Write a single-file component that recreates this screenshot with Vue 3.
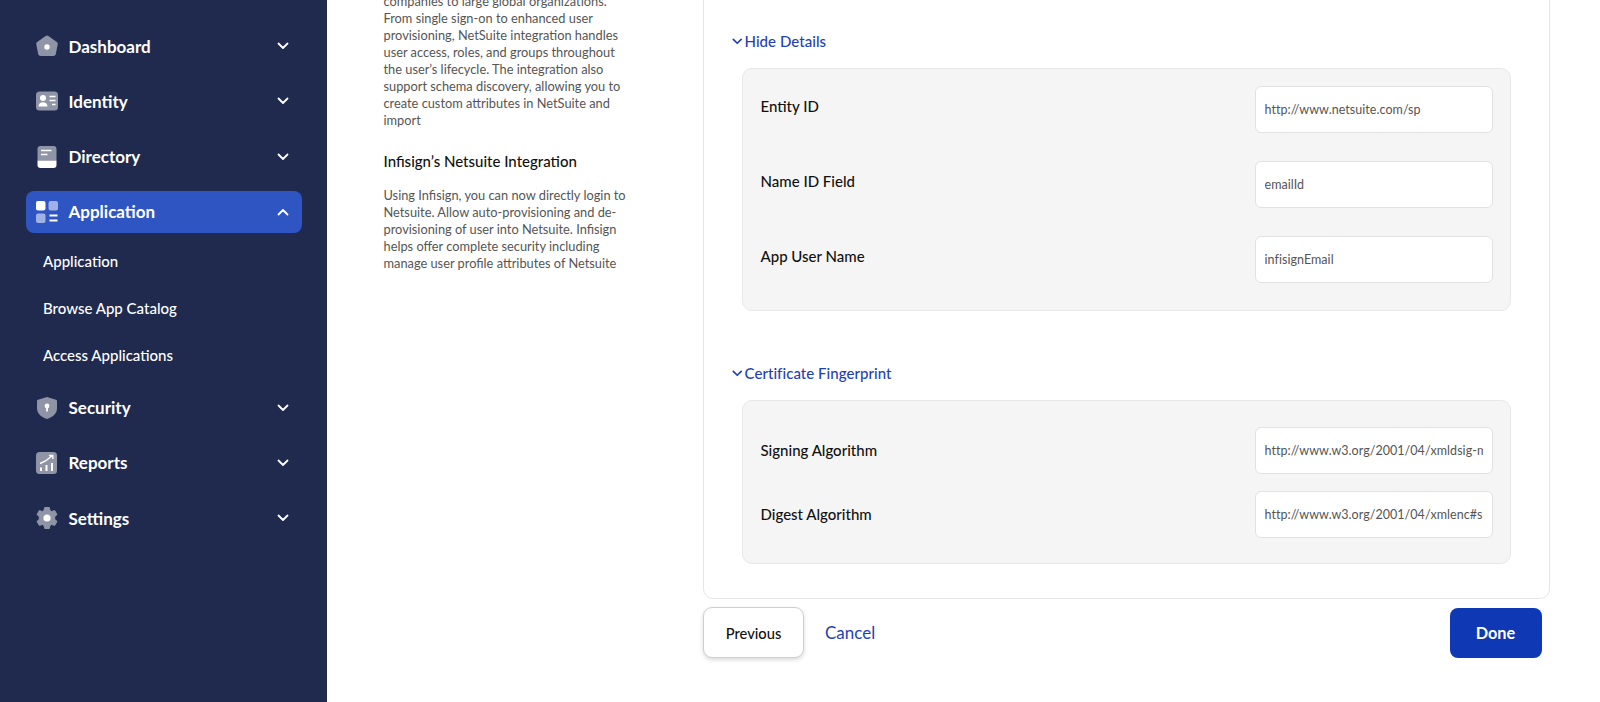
<script setup>
const aboveMenu = [
  { label: 'Dashboard', icon: 'dashboard' },
  { label: 'Identity', icon: 'identity' },
  { label: 'Directory', icon: 'directory' },
]
const belowMenu = [
  { label: 'Security', icon: 'security' },
  { label: 'Reports', icon: 'reports' },
  { label: 'Settings', icon: 'settings' },
]
const subItems = ['Application', 'Browse App Catalog', 'Access Applications']
const intro = [
  'companies to large global organizations.',
  'From single sign-on to enhanced user',
  'provisioning, NetSuite integration handles',
  'user access, roles, and groups throughout',
  'the user\u2019s lifecycle. The integration also',
  'support schema discovery, allowing you to',
  'create custom attributes in NetSuite and',
  'import',
]
const outro = [
  'Using Infisign, you can now directly login to',
  'Netsuite. Allow auto-provisioning and de-',
  'provisioning of user into Netsuite. Infisign',
  'helps offer complete security including',
  'manage user profile attributes of Netsuite',
]
const details = [
  { label: 'Entity ID', value: 'http://www.netsuite.com/sp' },
  { label: 'Name ID Field', value: 'emailId' },
  { label: 'App User Name', value: 'infisignEmail' },
]
const certs = [
  { label: 'Signing Algorithm', value: 'http://www.w3.org/2001/04/xmldsig-more#rsa-sha256' },
  { label: 'Digest Algorithm', value: 'http://www.w3.org/2001/04/xmlenc#sha256' },
]
</script>

<template>
  <div class="page">
    <aside class="sidebar">
      <div v-for="m in aboveMenu" :key="m.label" class="nav-row">
        <svg class="nav-icon" viewBox="0 0 22 22">
          <template v-if="m.icon === 'dashboard'">
            <path d="M9.6 1 1.2 7a2.4 2.4 0 0 0-.9 2.4l1.9 9.6c.2 1.2 1.2 2 2.4 2h12.8c1.2 0 2.2-.8 2.4-2l1.9-9.6A2.4 2.4 0 0 0 20.800 7L12.400 1a2.400 2.400 0 0 0-2.800 0Z" fill="#8f94a6"/>
            <circle cx="11" cy="12" r="2.700" fill="#fff"/>
          </template>
          <template v-else-if="m.icon === 'identity'">
            <rect x="0" y="1.500" width="22" height="19" rx="3.500" fill="#8f94a6"/>
            <circle cx="7" cy="8" r="3" fill="#fff"/>
            <path d="M2.500 16.500c0-2.700 2-4.200 4.500-4.200s4.500 1.500 4.500 4.200Z" fill="#fff"/>
            <path d="M13.500 6.500h6M13.500 10.500h6M16 14.500h3.500" stroke="#fff" stroke-width="1.500" fill="none"/>
          </template>
          <template v-else>
            <path d="M4.500 0h13A3 3 0 0 1 20.500 3v11.500h-19V3a3 3 0 0 1 3-3Z" fill="#8f94a6"/>
            <path d="M1.500 14.500h19V19a3 3 0 0 1-3 3h-13a3 3 0 0 1-3-3Z" fill="#fff"/>
            <path d="M5 4.500h10.500M5 8.500h6.500" stroke="#fff" stroke-width="1.500" fill="none"/>
          </template>
        </svg>
        <span class="nav-label">{{ m.label }}</span>
        <svg class="nav-chevron" viewBox="0 0 12 8"><path d="M1.500 1.500 6 6l4.500-4.500" /></svg>
      </div>

      <div class="nav-row nav-row-active">
        <svg class="nav-icon" viewBox="0 0 22 22">
          <rect x="0" y="0" width="9.500" height="9.500" rx="2" fill="#fff"/>
          <rect x="12.500" y="0" width="9.500" height="9.500" rx="2" fill="#9fb1e6"/>
          <rect x="0" y="12.500" width="9.500" height="9.500" rx="2" fill="#9fb1e6"/>
          <path d="M13.500 14.500h8M13.500 19.500h8" stroke="#fff" stroke-width="2" fill="none"/>
        </svg>
        <span class="nav-label">Application</span>
        <svg class="nav-chevron" viewBox="0 0 12 8"><path d="M1.500 6.500 6 2l4.500 4.500" /></svg>
      </div>

      <ul class="sub-list">
        <li v-for="s in subItems" :key="s" class="sub-item">{{ s }}</li>
      </ul>

      <div v-for="m in belowMenu" :key="m.label" class="nav-row">
        <svg class="nav-icon" viewBox="0 0 22 22">
          <template v-if="m.icon === 'security'">
            <path d="M11 0 2 2.800c-.8.200-1 .7-1 1.400v7c0 5.400 4.300 9 10 10.800 5.700-1.800 10-5.400 10-10.800v-7c0-.7-.2-1.200-1-1.400Z" fill="#8f94a6"/>
            <circle cx="11" cy="9" r="2.400" fill="#fff"/>
            <rect x="10.100" y="9" width="1.800" height="5.500" fill="#fff"/>
          </template>
          <template v-else-if="m.icon === 'reports'">
            <rect x="0" y="0" width="21" height="22" rx="3.500" fill="#8f94a6"/>
            <path d="M4 11.500 9.500 9l7-5.500M13 3.500h3.800v3.500" stroke="#fff" stroke-width="1.400" fill="none"/>
            <path d="M5 19v-3.500M10.500 19v-6M16 19v-8" stroke="#fff" stroke-width="2" fill="none"/>
          </template>
          <template v-else>
            <path d="M8.700.5h4.600l.7 3 1.700 1 3-.9 2.300 4-2.300 2.100v2.600l2.300 2.100-2.300 4-3-.9-1.700 1-.7 3H8.700l-.7-3-1.700-1-3 .9L1 14.400l2.300-2.100V9.700L1 7.600l2.300-4 3 .9 1.700-1Z" fill="#8f94a6" stroke="#8f94a6" stroke-width="1" stroke-linejoin="round"/>
            <circle cx="11" cy="11" r="3.600" fill="#fff"/>
          </template>
        </svg>
        <span class="nav-label">{{ m.label }}</span>
        <svg class="nav-chevron" viewBox="0 0 12 8"><path d="M1.500 1.500 6 6l4.500-4.500" /></svg>
      </div>
    </aside>

    <main class="main">
      <section class="about">
        <p class="about-text">
          <span v-for="l in intro" :key="l" class="line">{{ l }}</span>
        </p>
        <h3 class="about-title">Infisign&rsquo;s Netsuite Integration</h3>
        <p class="about-text">
          <span v-for="l in outro" :key="l" class="line">{{ l }}</span>
        </p>
      </section>

      <section class="form-col">
        <div class="card">
          <div class="toggle toggle-first">
            <svg class="toggle-chevron" viewBox="0 0 12 8"><path d="M1.500 1.500 6 6l4.500-4.500" /></svg>
            Hide Details
          </div>
          <div class="panel panel-details">
            <div v-for="f in details" :key="f.label" class="field">
              <label class="field-label field-label-raised">{{ f.label }}</label>
              <input class="field-input" readonly :value="f.value" />
            </div>
          </div>

          <div class="toggle toggle-second">
            <svg class="toggle-chevron" viewBox="0 0 12 8"><path d="M1.500 1.500 6 6l4.500-4.500" /></svg>
            Certificate Fingerprint
          </div>
          <div class="panel panel-certs">
            <div v-for="f in certs" :key="f.label" class="field">
              <label class="field-label">{{ f.label }}</label>
              <input class="field-input" readonly :value="f.value" />
            </div>
          </div>
        </div>

        <div class="footer">
          <button class="btn-prev" type="button">Previous</button>
          <a class="btn-cancel">Cancel</a>
          <button class="btn-done" type="button">Done</button>
        </div>
      </section>
    </main>
  </div>
</template>

<style scoped>
.page {
  display: flex;
  height: 702px;
  overflow: hidden;
  background: #fff;
  font-family: Lato, "Noto Sans", sans-serif;
}
.sidebar {
  width: 327px;
  flex: none;
  box-sizing: border-box;
  padding: 25px 25px 0 25.500px;
  background: #1f2a4e;
  display: flex;
  flex-direction: column;
}
.nav-row {
  height: 42px;
  flex: none;
  margin-bottom: 13.300px;
  display: flex;
  align-items: center;
  padding-left: 10px;
  padding-right: 13.500px;
  border-radius: 8px;
}
.nav-row-active {
  background: #2f55c2;
  margin-bottom: 0;
}
.nav-icon {
  width: 22px;
  height: 22px;
  flex: none;
}
.nav-label {
  margin-left: 11px;
  flex: 1;
  color: #fff;
  font-size: 17px;
  font-weight: 700;
}
.nav-chevron {
  width: 12px;
  height: 8px;
  flex: none;
}
.nav-chevron path {
  fill: none;
  stroke: #fff;
  stroke-width: 1.800;
  stroke-linecap: round;
  stroke-linejoin: round;
}
.sub-list {
  list-style: none;
  margin: 5.600px 0 8px;
  padding: 0 0 0 17.500px;
}
.sub-item {
  height: 46.700px;
  line-height: 46.700px;
  color: #fff;
  font-size: 15px;
  font-weight: 500;
}
.main {
  flex: 1;
  min-width: 0;
  display: flex;
  padding-left: 56.500px;
}
.about {
  width: 319.500px;
  flex: none;
  margin-top: -7.500px;
}
.about-text {
  margin: 0;
  font-size: 12.800px;
  line-height: 17px;
  color: #555;
}
.line {
  display: block;
  white-space: nowrap;
}
.about-title {
  margin: 22.500px 0 15.500px;
  font-size: 15px;
  line-height: 20px;
  font-weight: 500;
  color: #111;
}
.form-col {
  width: 847px;
  flex: none;
  display: flex;
  flex-direction: column;
}
.card {
  box-sizing: border-box;
  height: 619px;
  margin-top: -20px;
  flex: none;
  border: 1px solid #e6e6e6;
  border-radius: 10px;
  padding-left: 28px;
}
.toggle {
  display: flex;
  align-items: center;
  gap: 2px;
  height: 20px;
  color: #1f3fb5;
  font-size: 15px;
  letter-spacing: 0.05px;
  font-weight: 500;
}
.toggle-first {
  margin-top: 50px;
}
.toggle-second {
  margin-top: 52.500px;
}
.toggle-chevron {
  width: 10.500px;
  height: 7px;
  flex: none;
}
.toggle-chevron path {
  fill: none;
  stroke: #1f3fb5;
  stroke-width: 1.900;
  stroke-linecap: round;
  stroke-linejoin: round;
}
.panel {
  box-sizing: border-box;
  width: 769px;
  margin-left: 10px;
  margin-top: 16.500px;
  padding: 0 17.500px;
  background: #f5f5f5;
  border: 1px solid #e8e8e8;
  border-radius: 10px;
  display: flex;
  flex-direction: column;
}
.panel-details {
  height: 243px;
  padding-top: 17px;
  gap: 28px;
}
.panel-certs {
  height: 164px;
  margin-top: 16.500px;
  padding-top: 26px;
  gap: 17px;
}
.field {
  display: flex;
  align-items: center;
  justify-content: space-between;
  height: 47px;
  flex: none;
}
.field-label {
  font-size: 15px;
  font-weight: 500;
  color: #111;
}
.field-label-raised {
  margin-bottom: 6px;
}
.field-input {
  box-sizing: border-box;
  width: 238px;
  height: 47px;
  padding: 0 9px;
  background: #fff;
  border: 1px solid #e2e2e2;
  border-radius: 6px;
  outline: none;
  font-family: inherit;
  font-size: 12.500px;
  letter-spacing: 0.05px;
  color: #555;
}
.footer {
  display: flex;
  align-items: center;
  margin-top: 8px;
  padding-right: 8.500px;
}
.btn-prev {
  box-sizing: border-box;
  width: 101px;
  height: 51px;
  background: #fff;
  border: 1px solid #cfcfcf;
  border-radius: 9px;
  box-shadow: 0 2px 4px rgba(0, 0, 0, 0.15);
  font-family: inherit;
  font-size: 14.700px;
  font-weight: 500;
  color: #111;
}
.btn-cancel {
  margin-left: 21px;
  flex: 1;
  color: #1f3fb5;
  font-size: 17px;
}
.btn-done {
  width: 92px;
  height: 50px;
  background: #0f38b5;
  border: none;
  border-radius: 8px;
  font-family: inherit;
  font-size: 16.300px;
  font-weight: 700;
  color: #fff;
}
</style>
